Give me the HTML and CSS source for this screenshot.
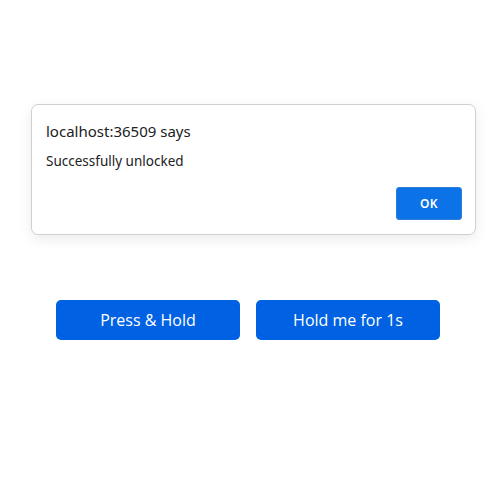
FILE: index.html
```html
<!DOCTYPE html>
<html>
<head>
<meta charset="utf-8">
<link rel="stylesheet" href="styles.css">
</head>
<body>
<main class="page">
  <div class="actions">
    <button class="hold-btn">Press &amp; Hold</button>
    <button class="hold-btn">Hold me for 1s</button>
  </div>
</main>
<div class="dialog">
  <div class="dialog-title">localhost:36509 says</div>
  <div class="dialog-message">Successfully unlocked</div>
  <div class="dialog-footer">
    <button class="ok-btn">OK</button>
  </div>
</div>
</body>
</html>
```
FILE: styles.css
```css
html, body {
  margin: 0;
  padding: 0;
  background: #fff;
  width: 500px;
  height: 500px;
  overflow: hidden;
}
.page {
  padding: 300px 0 0 56px;
}
.actions {
  display: flex;
  gap: 16px;
}
.hold-btn {
  width: 184px;
  height: 40px;
  border: none;
  border-radius: 5px;
  background: #0062e3;
  color: #fff;
  font-family: "Open Sans", sans-serif;
  font-size: 16px;
  padding: 0;
}
.dialog {
  position: absolute;
  left: 31px;
  top: 104px;
  width: 443px;
  height: 129px;
  border: 1px solid #d0d0d0;
  border-radius: 7px;
  background: #fff;
  box-shadow: 0 4px 14px rgba(0,0,0,0.08);
  box-sizing: content-box;
  display: flex;
  flex-direction: column;
  font-family: "Noto Sans", sans-serif;
  color: #202124;
}
.dialog-title {
  font-size: 15px;
  padding: 16px 0 0 14px;
  line-height: 20px;
}
.dialog-message {
  font-size: 13.5px;
  line-height: 18px;
  padding: 11px 0 0 14px;
}
.dialog-footer {
  display: flex;
  justify-content: flex-end;
  padding: 0 13px 0 0;
  margin-top: auto;
  margin-bottom: 14px;
}
.ok-btn {
  width: 66px;
  height: 33px;
  background: #0b72e7;
  border: 1px solid #2f7fd9;
  border-radius: 3px;
  color: #fff;
  font-family: "Noto Sans", sans-serif;
  font-weight: 600;
  font-size: 12px;
  letter-spacing: 0.5px;
  padding: 0;
}
```
